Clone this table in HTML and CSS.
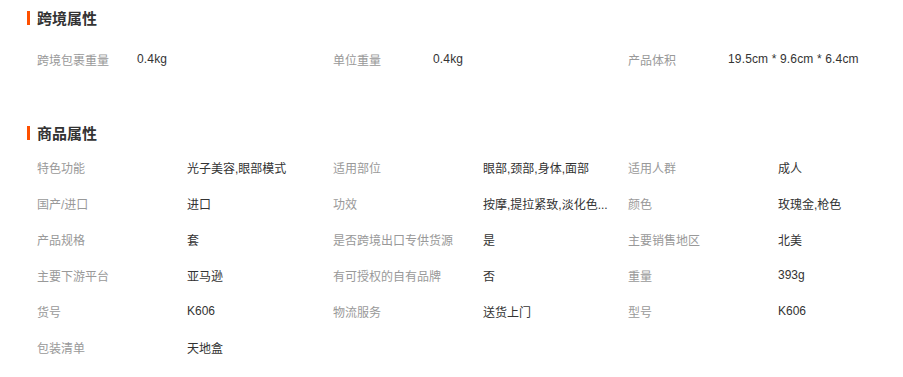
FILE: index.html
```html
<!DOCTYPE html>
<html lang="zh-CN">
<head>
<meta charset="utf-8">
<link rel="stylesheet" href="styles.css">
</head>
<body>
<div class="page">
  <section class="sec">
    <h2 class="title"><span class="bar"></span>跨境属性</h2>
    <div class="grid grid-cb">
      <div class="cell"><span class="k">跨境包裹重量</span><span class="v">0.4kg</span></div>
      <div class="cell"><span class="k">单位重量</span><span class="v">0.4kg</span></div>
      <div class="cell"><span class="k">产品体积</span><span class="v">19.5cm * 9.6cm * 6.4cm</span></div>
    </div>
  </section>
  <section class="sec sec2">
    <h2 class="title"><span class="bar"></span>商品属性</h2>
    <div class="grid grid-attr">
      <div class="cell"><span class="k">特色功能</span><span class="v">光子美容,眼部模式</span></div>
      <div class="cell"><span class="k">适用部位</span><span class="v">眼部,颈部,身体,面部</span></div>
      <div class="cell"><span class="k">适用人群</span><span class="v">成人</span></div>
      <div class="cell"><span class="k">国产/进口</span><span class="v">进口</span></div>
      <div class="cell"><span class="k">功效</span><span class="v">按摩,提拉紧致,淡化色...</span></div>
      <div class="cell"><span class="k">颜色</span><span class="v">玫瑰金,枪色</span></div>
      <div class="cell"><span class="k">产品规格</span><span class="v">套</span></div>
      <div class="cell"><span class="k">是否跨境出口专供货源</span><span class="v">是</span></div>
      <div class="cell"><span class="k">主要销售地区</span><span class="v">北美</span></div>
      <div class="cell"><span class="k">主要下游平台</span><span class="v">亚马逊</span></div>
      <div class="cell"><span class="k">有可授权的自有品牌</span><span class="v">否</span></div>
      <div class="cell"><span class="k">重量</span><span class="v">393g</span></div>
      <div class="cell"><span class="k">货号</span><span class="v">K606</span></div>
      <div class="cell"><span class="k">物流服务</span><span class="v">送货上门</span></div>
      <div class="cell"><span class="k">型号</span><span class="v">K606</span></div>
      <div class="cell"><span class="k">包装清单</span><span class="v">天地盒</span></div>
    </div>
  </section>
</div>
</body>
</html>
```
FILE: styles.css
```css
html, body {
  margin: 0;
  padding: 0;
  background: #fff;
}
body {
  font-family: "Liberation Sans", "Noto Sans CJK SC", sans-serif;
  font-size: 12px;
  color: #333;
}
.page {
  padding-left: 27px;
}
.sec2 {
  margin-top: 38px;
}
.title {
  margin: 0;
  height: 35px;
  display: flex;
  align-items: center;
  font-size: 15px;
  font-weight: bold;
  color: #333;
}
.bar {
  width: 3px;
  height: 14px;
  background: #ff5000;
  margin-right: 7px;
}
.grid {
  display: grid;
  grid-template-columns: 296px 295px 1fr;
  padding-left: 10px;
}
.grid-cb {
  margin-top: 6px;
}
.grid-attr {
  margin-top: -1px;
}
.cell {
  display: flex;
  height: 36px;
  align-items: center;
  white-space: nowrap;
}
.k {
  color: #999;
  flex: none;
}
.grid-cb .k { width: 100px; }
.grid-attr .k { width: 150px; }
.v {
  color: #333;
}
.grid-cb .v {
  letter-spacing: 0.15px;
}
```
